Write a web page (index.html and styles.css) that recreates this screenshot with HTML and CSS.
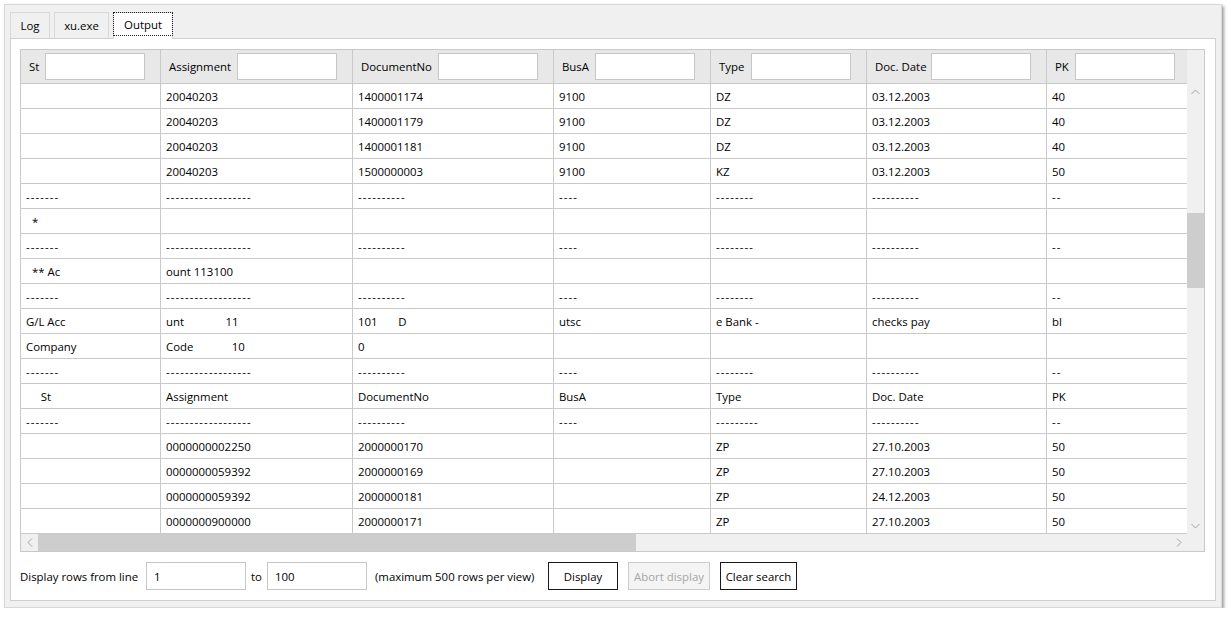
FILE: index.html
```html
<!DOCTYPE html>
<html>
<head>
<meta charset="utf-8">
<title>Output</title>
<link rel="stylesheet" href="styles.css">
</head>
<body>
<div class="window">
  <div class="tabs">
    <div class="tab tab-log">Log</div>
    <div class="tab tab-xu">xu.exe</div>
    <div class="tab tab-out active"><span class="focus">Output</span></div>
  </div>
  <div class="panel">
    <div class="grid">
      <div class="view">
        <div class="table">
          <div class="cell hcell"><span>St</span><input type="text"></div>
          <div class="cell hcell"><span>Assignment</span><input type="text"></div>
          <div class="cell hcell"><span>DocumentNo</span><input type="text"></div>
          <div class="cell hcell"><span>BusA</span><input type="text"></div>
          <div class="cell hcell"><span>Type</span><input type="text"></div>
          <div class="cell hcell"><span>Doc. Date</span><input type="text"></div>
          <div class="cell hcell"><span>PK</span><input type="text"></div>

          <div class="cell"></div><div class="cell">20040203</div><div class="cell">1400001174</div><div class="cell">9100</div><div class="cell">DZ</div><div class="cell">03.12.2003</div><div class="cell">40</div>
          <div class="cell"></div><div class="cell">20040203</div><div class="cell">1400001179</div><div class="cell">9100</div><div class="cell">DZ</div><div class="cell">03.12.2003</div><div class="cell">40</div>
          <div class="cell"></div><div class="cell">20040203</div><div class="cell">1400001181</div><div class="cell">9100</div><div class="cell">DZ</div><div class="cell">03.12.2003</div><div class="cell">40</div>
          <div class="cell"></div><div class="cell">20040203</div><div class="cell">1500000003</div><div class="cell">9100</div><div class="cell">KZ</div><div class="cell">03.12.2003</div><div class="cell">50</div>

          <div class="cell d">-------</div><div class="cell d">------------------</div><div class="cell d">----------</div><div class="cell d">----</div><div class="cell d">--------</div><div class="cell d">----------</div><div class="cell d">--</div>
          <div class="cell">  *</div><div class="cell"></div><div class="cell"></div><div class="cell"></div><div class="cell"></div><div class="cell"></div><div class="cell"></div>
          <div class="cell d">-------</div><div class="cell d">------------------</div><div class="cell d">----------</div><div class="cell d">----</div><div class="cell d">--------</div><div class="cell d">----------</div><div class="cell d">--</div>
          <div class="cell">  ** Ac</div><div class="cell">ount 113100</div><div class="cell"></div><div class="cell"></div><div class="cell"></div><div class="cell"></div><div class="cell"></div>
          <div class="cell d">-------</div><div class="cell d">------------------</div><div class="cell d">----------</div><div class="cell d">----</div><div class="cell d">--------</div><div class="cell d">----------</div><div class="cell d">--</div>
          <div class="cell">G/L Acc</div><div class="cell">unt              11</div><div class="cell">101       D</div><div class="cell">utsc</div><div class="cell">e Bank -</div><div class="cell">checks pay</div><div class="cell">bl</div>
          <div class="cell">Company</div><div class="cell">Code             10</div><div class="cell">0</div><div class="cell"></div><div class="cell"></div><div class="cell"></div><div class="cell"></div>
          <div class="cell d">-------</div><div class="cell d">------------------</div><div class="cell d">----------</div><div class="cell d">----</div><div class="cell d">--------</div><div class="cell d">----------</div><div class="cell d">--</div>
          <div class="cell">     St</div><div class="cell">Assignment</div><div class="cell">DocumentNo</div><div class="cell">BusA</div><div class="cell">Type</div><div class="cell">Doc. Date</div><div class="cell">PK</div>
          <div class="cell d">-------</div><div class="cell d">------------------</div><div class="cell d">----------</div><div class="cell d">----</div><div class="cell d">---------</div><div class="cell d">----------</div><div class="cell d">--</div>

          <div class="cell"></div><div class="cell">0000000002250</div><div class="cell">2000000170</div><div class="cell"></div><div class="cell">ZP</div><div class="cell">27.10.2003</div><div class="cell">50</div>
          <div class="cell"></div><div class="cell">0000000059392</div><div class="cell">2000000169</div><div class="cell"></div><div class="cell">ZP</div><div class="cell">27.10.2003</div><div class="cell">50</div>
          <div class="cell"></div><div class="cell">0000000059392</div><div class="cell">2000000181</div><div class="cell"></div><div class="cell">ZP</div><div class="cell">24.12.2003</div><div class="cell">50</div>
          <div class="cell"></div><div class="cell">0000000900000</div><div class="cell">2000000171</div><div class="cell"></div><div class="cell">ZP</div><div class="cell">27.10.2003</div><div class="cell">50</div>
        </div>
      </div>
      <div class="vscroll">
        <div class="arrowbtn">
          <svg width="9" height="6" viewBox="0 0 9 6"><polyline points="0.5,5 4.5,1 8.5,5" fill="none" stroke="#a3a3a3" stroke-width="1"/></svg>
        </div>
        <div class="vtrack"><div class="vthumb"></div></div>
        <div class="arrowbtn">
          <svg width="9" height="6" viewBox="0 0 9 6"><polyline points="0.5,1 4.5,5 8.5,1" fill="none" stroke="#a3a3a3" stroke-width="1"/></svg>
        </div>
      </div>
      <div class="hscroll">
        <div class="arrowbtn">
          <svg width="6" height="9" viewBox="0 0 6 9"><polyline points="5,0.5 1,4.5 5,8.5" fill="none" stroke="#a3a3a3" stroke-width="1"/></svg>
        </div>
        <div class="htrack"><div class="hthumb"></div></div>
        <div class="arrowbtn">
          <svg width="6" height="9" viewBox="0 0 6 9"><polyline points="1,0.5 5,4.5 1,8.5" fill="none" stroke="#a3a3a3" stroke-width="1"/></svg>
        </div>
      </div>
      <div class="corner"></div>
    </div>
    <div class="controls">
      <span class="lbl-from">Display rows from line</span>
      <input class="field" type="text" value="1">
      <span class="lbl-to">to</span>
      <input class="field" type="text" value="100">
      <span class="lbl-max">(maximum 500 rows per view)</span>
      <button class="btn btn-display">Display</button>
      <button class="btn btn-abort" disabled>Abort display</button>
      <button class="btn btn-clear">Clear search</button>
    </div>
  </div>
</div>
</body>
</html>
```

FILE: styles.css
```css
* {
  box-sizing: border-box;
}

body {
  margin: 0;
  background: #ffffff;
  font-family: "Open Sans", sans-serif;
  font-size: 11.4px;
  color: #000000;
}

.window {
  margin: 4px 0 0 4px;
  width: 1218px;
  height: 604px;
  background: #f0f0f0;
  border: 1px solid #d8d8d8;
  box-shadow: 2px 2px 3px rgba(0, 0, 0, 0.38);
  padding: 7px 5px 6px 5px;
  display: flex;
  flex-direction: column;
}

.tabs {
  display: flex;
  gap: 4px;
  height: 26px;
  position: relative;
  z-index: 1;
}

.tab {
  height: 26px;
  border: 1px solid #d9d9d9;
  border-bottom: 0;
  background: #f0f0f0;
  display: flex;
  align-items: center;
  justify-content: center;
  padding-bottom: 1px;
}

.tab-log { width: 40px; }
.tab-xu { width: 55px; }
.tab-out { width: 60px; }

.tab.active {
  height: 27px;
  background: #ffffff;
  align-items: flex-start;
  padding: 0;
}

.focus {
  margin: -1px -1px 0 -1px;
  width: calc(100% + 2px);
  height: 24px;
  border: 1px dotted #222222;
  display: flex;
  align-items: center;
  justify-content: center;
}

.panel {
  flex: 1;
  border: 1px solid #d0d0d0;
  background: #ffffff;
  padding: 10px 10px 10px 9px;
  display: flex;
  flex-direction: column;
}

.grid {
  height: 503px;
  border: 1px solid #c9c9c9;
  display: grid;
  grid-template-columns: 1fr 17px;
  grid-template-rows: 1fr 17px;
}

.view {
  overflow: hidden;
  grid-row: 1;
  grid-column: 1;
}

.table {
  display: grid;
  grid-template-columns: 140px 192px 201px 157px 156px 180px 144px;
  grid-template-rows: 34px;
  grid-auto-rows: 25px;
  width: max-content;
}

.cell {
  border-right: 1px solid #c9c9c9;
  border-bottom: 1px solid #c9c9c9;
  padding-left: 5px;
  display: flex;
  align-items: center;
  white-space: pre;
  overflow: hidden;
}

.cell.d {
  letter-spacing: 1.1px;
}

.hcell {
  background: #e8e8e8;
  padding: 0 15px 0 8px;
  justify-content: space-between;
}

.hcell input {
  width: 100px;
  height: 27px;
  border: 1px solid #c6c6c6;
  background: #ffffff;
  font: inherit;
  flex: none;
  margin: 0;
}

.vscroll {
  grid-row: 1;
  grid-column: 2;
  background: #f0f0f0;
  padding-top: 33px;
  display: flex;
  flex-direction: column;
}

.vtrack {
  flex: 1;
}

.vthumb {
  margin-top: 113px;
  height: 75px;
  background: #cdcdcd;
}

.hscroll {
  grid-row: 2;
  grid-column: 1;
  background: #f0f0f0;
  display: flex;
}

.htrack {
  flex: 1;
}

.hthumb {
  width: 598px;
  height: 100%;
  background: #cdcdcd;
}

.arrowbtn {
  width: 17px;
  height: 17px;
  flex: none;
  display: flex;
  align-items: center;
  justify-content: center;
}

.arrowbtn svg {
  display: block;
}

.corner {
  grid-row: 2;
  grid-column: 2;
  background: #f0f0f0;
}

.controls {
  margin-top: 10px;
  height: 28px;
  display: flex;
  align-items: center;
}

.lbl-from {
  width: 126px;
  flex: none;
}

.lbl-to {
  width: 21px;
  padding-left: 5px;
  flex: none;
}

.lbl-max {
  width: 181px;
  padding-left: 8px;
  flex: none;
  white-space: nowrap;
}

.field {
  width: 100px;
  height: 28px;
  border: 1px solid #c6c6c6;
  background: #ffffff;
  font: inherit;
  color: #000000;
  padding: 0 0 0 7px;
  margin: 0;
  flex: none;
}

.btn {
  height: 28px;
  border: 1px solid #1a1a1a;
  background: #ffffff;
  font: inherit;
  color: #000000;
  padding: 0;
  margin: 0;
  flex: none;
}

.btn-display { width: 70px; }

.btn-abort {
  width: 82px;
  margin-left: 10px;
  border-color: #cccccc;
  background: #f4f4f4;
  color: #a6a6a6;
}

.btn-clear {
  width: 77px;
  margin-left: 10px;
}
```
